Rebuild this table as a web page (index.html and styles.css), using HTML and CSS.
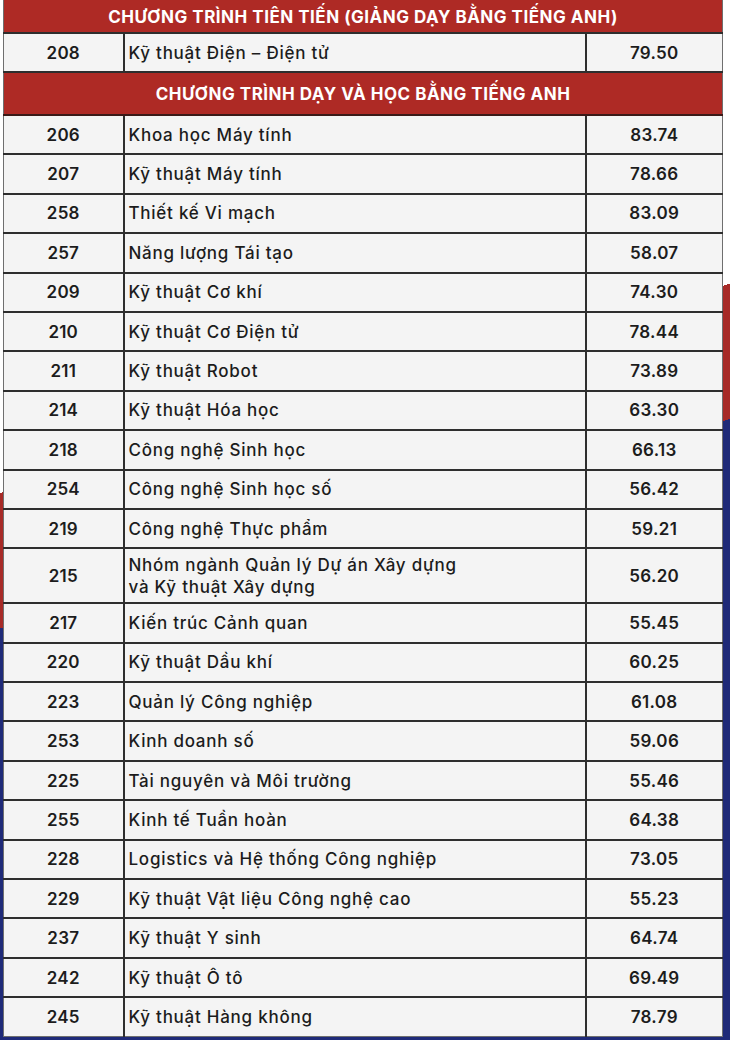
FILE: index.html
```html
<!DOCTYPE html>
<html lang="vi">
<head>
<meta charset="utf-8">
<title>Điểm chuẩn</title>
<link rel="stylesheet" href="styles.css">
</head>
<body>
<div class="page">
<table class="scores">
<colgroup><col class="c-code"><col class="c-name"><col class="c-score"></colgroup>
<tbody>
<tr class="head h1"><th colspan="3">CHƯƠNG TRÌNH TIÊN TIẾN (GIẢNG DẠY BẰNG TIẾNG ANH)</th></tr>
<tr class="r first"><td class="code">208</td><td class="name">Kỹ thuật Điện – Điện tử</td><td class="score">79.50</td></tr>
<tr class="head h2"><th colspan="3">CHƯƠNG TRÌNH DẠY VÀ HỌC BẰNG TIẾNG ANH</th></tr>
<tr class="r"><td class="code">206</td><td class="name">Khoa học Máy tính</td><td class="score">83.74</td></tr>
<tr class="r"><td class="code">207</td><td class="name">Kỹ thuật Máy tính</td><td class="score">78.66</td></tr>
<tr class="r"><td class="code">258</td><td class="name">Thiết kế Vi mạch</td><td class="score">83.09</td></tr>
<tr class="r"><td class="code">257</td><td class="name">Năng lượng Tái tạo</td><td class="score">58.07</td></tr>
<tr class="r"><td class="code">209</td><td class="name">Kỹ thuật Cơ khí</td><td class="score">74.30</td></tr>
<tr class="r"><td class="code">210</td><td class="name">Kỹ thuật Cơ Điện tử</td><td class="score">78.44</td></tr>
<tr class="r"><td class="code">211</td><td class="name">Kỹ thuật Robot</td><td class="score">73.89</td></tr>
<tr class="r"><td class="code">214</td><td class="name">Kỹ thuật Hóa học</td><td class="score">63.30</td></tr>
<tr class="r"><td class="code">218</td><td class="name">Công nghệ Sinh học</td><td class="score">66.13</td></tr>
<tr class="r"><td class="code">254</td><td class="name">Công nghệ Sinh học số</td><td class="score">56.42</td></tr>
<tr class="r"><td class="code">219</td><td class="name">Công nghệ Thực phẩm</td><td class="score">59.21</td></tr>
<tr class="r tall"><td class="code">215</td><td class="name">Nhóm ngành Quản lý Dự án Xây dựng<br>và Kỹ thuật Xây dựng</td><td class="score">56.20</td></tr>
<tr class="r"><td class="code">217</td><td class="name">Kiến trúc Cảnh quan</td><td class="score">55.45</td></tr>
<tr class="r"><td class="code">220</td><td class="name">Kỹ thuật Dầu khí</td><td class="score">60.25</td></tr>
<tr class="r"><td class="code">223</td><td class="name">Quản lý Công nghiệp</td><td class="score">61.08</td></tr>
<tr class="r"><td class="code">253</td><td class="name">Kinh doanh số</td><td class="score">59.06</td></tr>
<tr class="r"><td class="code">225</td><td class="name">Tài nguyên và Môi trường</td><td class="score">55.46</td></tr>
<tr class="r"><td class="code">255</td><td class="name">Kinh tế Tuần hoàn</td><td class="score">64.38</td></tr>
<tr class="r"><td class="code">228</td><td class="name">Logistics và Hệ thống Công nghiệp</td><td class="score">73.05</td></tr>
<tr class="r"><td class="code">229</td><td class="name">Kỹ thuật Vật liệu Công nghệ cao</td><td class="score">55.23</td></tr>
<tr class="r"><td class="code">237</td><td class="name">Kỹ thuật Y sinh</td><td class="score">64.74</td></tr>
<tr class="r"><td class="code">242</td><td class="name">Kỹ thuật Ô tô</td><td class="score">69.49</td></tr>
<tr class="r"><td class="code">245</td><td class="name">Kỹ thuật Hàng không</td><td class="score">78.79</td></tr>
</tbody>
</table>
</div>
</body>
</html>
```

FILE: styles.css
```css
html, body {
  margin: 0;
  padding: 0;
}

.page {
  width: 730px;
  height: 1040px;
  box-sizing: border-box;
  padding: 0 8px 0 3px;
  background: linear-gradient(164deg, #ffffff 474px, #a72a27 474px, #a72a27 604px, #1f2a78 604px);
  overflow: hidden;
}

.scores {
  width: 719px;
  border-collapse: collapse;
  table-layout: fixed;
  font-family: Inter, "Noto Sans", sans-serif;
  color: #1c1c1c;
  border-left: 1px solid #6f6f6f;
  border-right: 1px solid #6f6f6f;
}

.c-code { width: 120px; }
.c-name { width: 462px; }
.c-score { width: 137px; }

.head th {
  background: #ae2a25;
  color: #ffffff;
  font-weight: 700;
  font-size: 17px;
  letter-spacing: 0.5px;
  text-align: center;
  padding: 1px 0 0;
  border-bottom: 2px solid #3a1a18;
}

.h1 { height: 33px; }
.h1 th { border-bottom-width: 1px; }
.h2 { height: 43px; }
.h2 th { border-top: 2px solid #3a1a18; }

.r { height: 39.4px; }
.r.first { height: 39px; }
.r.tall { height: 55px; }

.r td {
  background: #f4f4f4;
  border: 2px solid #2e2e2e;
  padding: 0;
  font-size: 17px;
  vertical-align: middle;
}

.r td:first-child { border-left: 1px solid #6f6f6f; }
.r td:last-child { border-right: 1px solid #6f6f6f; }
.r:last-child td { border-bottom: 1px solid #6f6f6f; }

.code {
  text-align: center;
  font-weight: 600;
  letter-spacing: 0.2px;
}

.name {
  padding-left: 4px !important;
  font-weight: 500;
  letter-spacing: 0.75px;
  line-height: 22px;
}

.score {
  text-align: center;
  font-weight: 600;
  letter-spacing: 0.3px;
}
```
